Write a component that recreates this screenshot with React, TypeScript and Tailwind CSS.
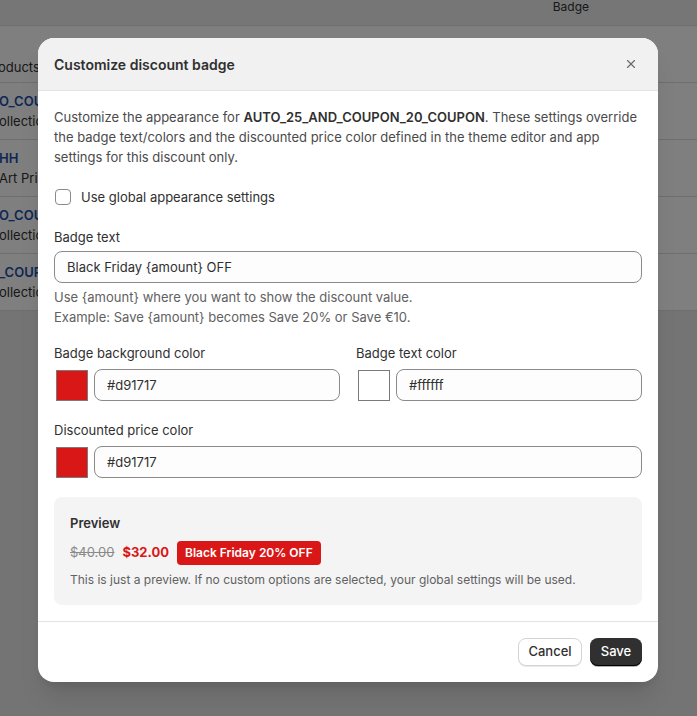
import React from "react";
import { X } from "lucide-react";

const rows = [
  { code: "O_COUPON", sub: "ollections" },
  { code: "HH", sub: "Art Prints" },
  { code: "O_COUPON", sub: "ollections" },
  { code: "_COUPON", sub: "ollections" },
];

function ColorField({ color, value }: { color: string; value: string }) {
  return (
    <div className="flex items-center gap-1.5">
      <div className="w-8 h-[31px] shrink-0 ml-0.5 border border-[#7a7a7a]" style={{ backgroundColor: color }} />
      <input
        readOnly
        value={value}
        className="flex-1 min-w-0 h-8 rounded-lg border border-[#8a8a8a] bg-[#fdfdfd] px-3 text-[13px] text-[#303030] outline-none"
      />
    </div>
  );
}

export default function App() {
  return (
    <div className="relative w-[697px] h-[716px] overflow-hidden bg-[#e9e9e9]" style={{ fontFamily: "Inter, 'Noto Sans', sans-serif" }}>
      {/* page behind the dialog */}
      <div className="h-[26px] bg-[#ededed] border-b border-[#dcdcdc] flex justify-end pr-[108px] items-start">
        <span className="text-[12px] text-[#303030] leading-[14px]">Badge</span>
      </div>
      <div className="bg-white">
        <div className="h-[57px] border-b border-[#dcdcdc] flex items-end pb-[5px] text-[13px] text-[#303030] -ml-[15px]">
          Products
        </div>
        {rows.map((r, i) => (
          <div key={i} className="h-[57px] border-b border-[#dcdcdc] flex flex-col justify-center -ml-px gap-0.5">
            <span className="text-[13px] font-semibold text-[#1d4fa8] leading-[18px]">{r.code}</span>
            <span className="text-[13px] text-[#303030] leading-[18px]">{r.sub}</span>
          </div>
        ))}
      </div>

      <div className="absolute inset-0 bg-black/50" />

      {/* dialog */}
      <div className="absolute left-[38px] top-[38px] w-[620px] rounded-2xl bg-white overflow-hidden shadow-xl">
        <div className="h-[53px] bg-[#f1f1f1] border-b border-[#e3e3e3] flex items-center justify-between pl-4 pr-5">
          <h2 className="text-[14px] font-semibold text-[#303030]">Customize discount badge</h2>
          <X size={14} strokeWidth={2} className="text-[#6b6b6b]" />
        </div>

        <div className="px-4 pt-[16px] pb-4 text-[13px] text-[#303030]">
          <p className="leading-5 text-[#4a4a4a]">
            Customize the appearance for <span className="font-semibold text-[#303030]">AUTO_25_AND_COUPON_20_COUPON</span>. These settings override
            the badge text/colors and the discounted price color defined in the theme editor and app settings for this discount only.
          </p>

          <label className="mt-[20px] flex items-center gap-2.5 leading-5">
            <span className="w-4 h-4 ml-px rounded-[4px] border border-[#8a8a8a] bg-white" />
            <span className="text-[#303030]">Use global appearance settings</span>
          </label>

          <div className="mt-[20px]">
            <div className="leading-5">Badge text</div>
            <input
              readOnly
              value="Black Friday {amount} OFF"
              className="mt-1 w-full h-8 rounded-lg border border-[#8a8a8a] bg-[#fdfdfd] px-3 text-[13px] text-[#303030] outline-none"
            />
            <div className="mt-1 leading-5 text-[#616161]">
              <div>Use {"{amount}"} where you want to show the discount value.</div>
              <div>Example: Save {"{amount}"} becomes Save 20% or Save €10.</div>
            </div>
          </div>

          <div className="mt-4 grid grid-cols-2 gap-4">
            <div>
              <div className="leading-5 mb-1.5">Badge background color</div>
              <ColorField color="#d91717" value="#d91717" />
            </div>
            <div>
              <div className="leading-5 mb-1.5">Badge text color</div>
              <ColorField color="#ffffff" value="#ffffff" />
            </div>
          </div>

          <div className="mt-[19px]">
            <div className="leading-5 mb-1.5">Discounted price color</div>
            <ColorField color="#d91717" value="#d91717" />
          </div>

          <div className="mt-[19px] rounded-lg bg-[#f4f4f4] px-4 pt-4 pb-[17px]">
            <div className="font-semibold leading-5">Preview</div>
            <div className="mt-2 flex items-center gap-2">
              <span className="line-through text-[#8a8a8a]">$40.00</span>
              <span className="font-bold text-[#d91717]">$32.00</span>
              <span className="rounded bg-[#d91717] px-2 py-[3px] text-[12px] font-semibold text-white leading-[18px]">Black Friday 20% OFF</span>
            </div>
            <div className="mt-[7px] text-[12px] text-[#616161] leading-4">
              This is just a preview. If no custom options are selected, your global settings will be used.
            </div>
          </div>
        </div>

        <div className="border-t border-[#e3e3e3] flex justify-end gap-2 px-4 py-4">
          <button className="h-7 w-16 flex items-center justify-center rounded-lg border border-[#d4d4d4] bg-white text-[13px] font-medium text-[#303030] shadow-[0_1px_0_rgba(0,0,0,0.08)]">
            Cancel
          </button>
          <button className="h-7 w-[52px] flex items-center justify-center rounded-lg bg-[#303030] text-[13px] font-medium text-white shadow-[inset_0_-1px_0_#000,0_1px_0_rgba(0,0,0,0.3)]">
            Save
          </button>
        </div>
      </div>
    </div>
  );
}
